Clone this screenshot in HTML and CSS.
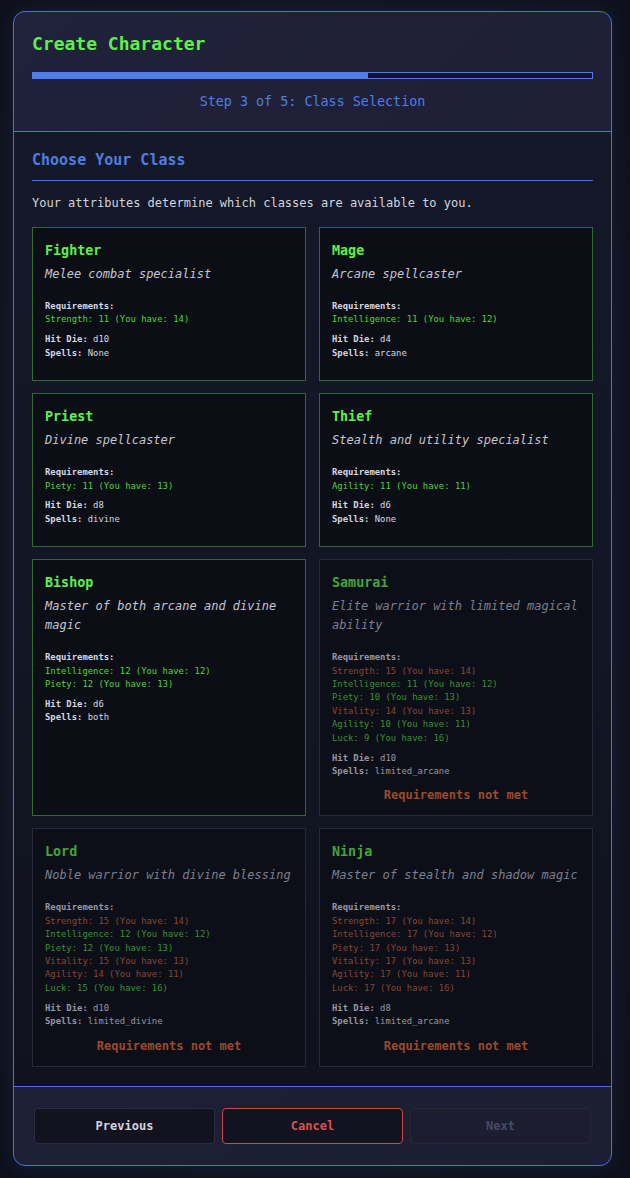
FILE: index.html
```html
<!DOCTYPE html>
<html lang="en">
<head>
  <meta charset="UTF-8" />
  <title>Create Character</title>
  <link rel="stylesheet" href="styles.css">
</head>
<body>

  <div class="panel">
    <header class="panel-head">
      <h1>Create Character</h1>
      <div class="progress"><div class="progress-fill"></div></div>
      <p class="step">Step 3 of 5: Class Selection</p>
    </header>

    <main class="panel-body">
      <h2>Choose Your Class</h2>
      <p class="intro">Your attributes determine which classes are available to you.</p>

      <div class="class-grid">
        <div class="class-card">
          <h3>Fighter</h3>
          <p class="desc">Melee combat specialist</p>
          <div class="reqs">
            <div class="label">Requirements:</div>
            <div class="ok">Strength: 11 (You have: 14)</div>
          </div>
          <div class="stats">
            <div><b>Hit Die:</b> d10</div>
            <div><b>Spells:</b> None</div>
          </div>
        </div>

        <div class="class-card">
          <h3>Mage</h3>
          <p class="desc">Arcane spellcaster</p>
          <div class="reqs">
            <div class="label">Requirements:</div>
            <div class="ok">Intelligence: 11 (You have: 12)</div>
          </div>
          <div class="stats">
            <div><b>Hit Die:</b> d4</div>
            <div><b>Spells:</b> arcane</div>
          </div>
        </div>

        <div class="class-card">
          <h3>Priest</h3>
          <p class="desc">Divine spellcaster</p>
          <div class="reqs">
            <div class="label">Requirements:</div>
            <div class="ok">Piety: 11 (You have: 13)</div>
          </div>
          <div class="stats">
            <div><b>Hit Die:</b> d8</div>
            <div><b>Spells:</b> divine</div>
          </div>
        </div>

        <div class="class-card">
          <h3>Thief</h3>
          <p class="desc">Stealth and utility specialist</p>
          <div class="reqs">
            <div class="label">Requirements:</div>
            <div class="ok">Agility: 11 (You have: 11)</div>
          </div>
          <div class="stats">
            <div><b>Hit Die:</b> d6</div>
            <div><b>Spells:</b> None</div>
          </div>
        </div>

        <div class="class-card">
          <h3>Bishop</h3>
          <p class="desc">Master of both arcane and divine magic</p>
          <div class="reqs">
            <div class="label">Requirements:</div>
            <div class="ok">Intelligence: 12 (You have: 12)</div>
            <div class="ok">Piety: 12 (You have: 13)</div>
          </div>
          <div class="stats">
            <div><b>Hit Die:</b> d6</div>
            <div><b>Spells:</b> both</div>
          </div>
        </div>

        <div class="class-card locked">
          <h3>Samurai</h3>
          <p class="desc">Elite warrior with limited magical ability</p>
          <div class="reqs">
            <div class="label">Requirements:</div>
            <div class="bad">Strength: 15 (You have: 14)</div>
            <div class="ok">Intelligence: 11 (You have: 12)</div>
            <div class="ok">Piety: 10 (You have: 13)</div>
            <div class="bad">Vitality: 14 (You have: 13)</div>
            <div class="ok">Agility: 10 (You have: 11)</div>
            <div class="ok">Luck: 9 (You have: 16)</div>
          </div>
          <div class="stats">
            <div><b>Hit Die:</b> d10</div>
            <div><b>Spells:</b> limited_arcane</div>
          </div>
          <div class="not-met">Requirements not met</div>
        </div>

        <div class="class-card locked">
          <h3>Lord</h3>
          <p class="desc">Noble warrior with divine blessing</p>
          <div class="reqs">
            <div class="label">Requirements:</div>
            <div class="bad">Strength: 15 (You have: 14)</div>
            <div class="ok">Intelligence: 12 (You have: 12)</div>
            <div class="ok">Piety: 12 (You have: 13)</div>
            <div class="bad">Vitality: 15 (You have: 13)</div>
            <div class="bad">Agility: 14 (You have: 11)</div>
            <div class="ok">Luck: 15 (You have: 16)</div>
          </div>
          <div class="stats">
            <div><b>Hit Die:</b> d10</div>
            <div><b>Spells:</b> limited_divine</div>
          </div>
          <div class="not-met">Requirements not met</div>
        </div>

        <div class="class-card locked">
          <h3>Ninja</h3>
          <p class="desc">Master of stealth and shadow magic</p>
          <div class="reqs">
            <div class="label">Requirements:</div>
            <div class="bad">Strength: 17 (You have: 14)</div>
            <div class="bad">Intelligence: 17 (You have: 12)</div>
            <div class="bad">Piety: 17 (You have: 13)</div>
            <div class="bad">Vitality: 17 (You have: 13)</div>
            <div class="bad">Agility: 17 (You have: 11)</div>
            <div class="bad">Luck: 17 (You have: 16)</div>
          </div>
          <div class="stats">
            <div><b>Hit Die:</b> d8</div>
            <div><b>Spells:</b> limited_arcane</div>
          </div>
          <div class="not-met">Requirements not met</div>
        </div>
      </div>
    </main>

    <footer class="panel-foot">
      <button class="btn">Previous</button>
      <button class="btn btn-cancel">Cancel</button>
      <button class="btn btn-off" disabled>Next</button>
    </footer>
  </div>

</body>
</html>
```

FILE: styles.css
```css
body {
  font-family: 'DejaVu Sans Mono', 'Liberation Mono', monospace;
  background: radial-gradient(ellipse at center, #161a2a 0%, #111420 70%, #0e111b 100%);
  color: #c9cbd6;
  margin: 0;
  padding: 11px 0 0 13px;
  min-height: 1178px;
  box-sizing: border-box;
}

.panel {
  width: 599px;
  box-sizing: border-box;
  border: 1px solid #4a72d9;
  border-radius: 12px;
  background: linear-gradient(135deg, #20213a 0%, #1c1e32 100%);
  box-shadow: 0 0 18px rgba(60, 100, 220, 0.15);
  overflow: hidden;
}

.panel-head {
  padding: 21px 18px 20px;
  border-bottom: 1px solid #4a72d9;
}

.panel-head h1 {
  margin: 0;
  font-size: 18px;
  line-height: 22px;
  color: #5ef04a;
}

.progress {
  margin-top: 17px;
  height: 5px;
  border: 1px solid #4f7ee6;
  background: #12142a;
}

.progress-fill {
  width: 60%;
  height: 100%;
  background: #4f7ee6;
}

.step {
  margin: 14px 0 0;
  text-align: center;
  font-size: 13.4px;
  line-height: 18px;
  color: #4f7ee0;
}

.panel-body {
  padding: 18px 18px 19px;
  background: linear-gradient(180deg, #151829 0%, #10131e 100%);
}

.panel-body h2 {
  margin: 0;
  padding-bottom: 10px;
  border-bottom: 1px solid #4a72d9;
  font-size: 15px;
  line-height: 20px;
  color: #4f7ee0;
}

.intro {
  margin: 13px 0 15px;
  font-size: 12px;
  line-height: 18px;
  color: #d2d4de;
}

.class-grid {
  display: grid;
  grid-template-columns: 1fr 1fr;
  column-gap: 13px;
  row-gap: 12px;
}

.class-card {
  background: #0c0e16;
  border: 1px solid #2d6a2c;
  padding: 13px 12px 12px;
}

.class-card h3 {
  margin: 0 0 4px;
  font-size: 13.4px;
  line-height: 20px;
  color: #5ef04a;
}

.desc {
  margin: 0 0 16px;
  font-size: 12px;
  line-height: 19px;
  font-style: italic;
  color: #c4c6d0;
}

.reqs,
.stats {
  font-size: 8.9px;
  line-height: 13.4px;
}

.reqs .label {
  font-weight: bold;
  color: #d6d8e2;
}

.ok {
  color: #4fd43e;
}

.bad {
  color: #c25e3a;
}

.stats {
  margin: 6.5px 0 8px;
  color: #d6d8e2;
}

.locked {
  border-color: #262a38;
  background: #0d0f18;
  padding-bottom: 10px;
}

.locked h3 { color: #45a33a; }
.locked .desc { color: #7c7f8c; }
.locked .reqs .label,
.locked .stats { color: #9598a4; }
.locked .ok { color: #36932c; }
.locked .bad { color: #8a4630; }

.not-met {
  text-align: center;
  font-size: 12px;
  line-height: 19px;
  font-weight: bold;
  color: #9a4a2c;
}

.panel-foot {
  display: flex;
  gap: 7px;
  padding: 21px 20px 21px;
  border-top: 1px solid #4a72d9;
}

.btn {
  flex: 1;
  height: 36px;
  font-family: inherit;
  font-size: 12px;
  font-weight: bold;
  border-radius: 4px;
  border: 1px solid #2a2d40;
  background: #12131f;
  color: #d4d6e0;
}

.btn-cancel {
  border-color: #c94a4a;
  color: #d9534f;
}

.btn-off {
  background: #1c1d2e;
  border-color: #262839;
  color: #474a62;
}
```
